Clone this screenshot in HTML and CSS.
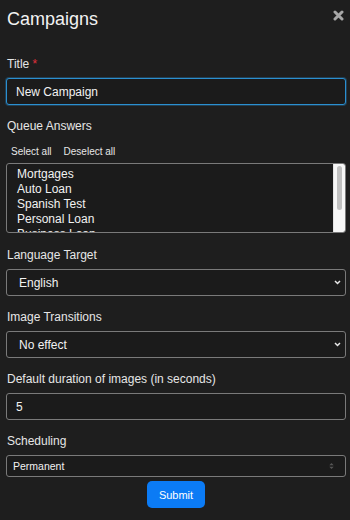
FILE: index.html
```html
<!DOCTYPE html>
<html lang="en">
<head>
    <meta charset="UTF-8">
    <meta name="viewport" content="width=device-width, initial-scale=1.0">
    <title>Campaigns</title>
    <link rel="stylesheet" href="styles.css">
</head>
<body>
    <div class="modal">
        <div class="modal-header">
            <h1>Campaigns</h1>
            <svg class="close-icon" width="11" height="11" viewBox="0 0 11 11">
                <path d="M2 2 L9 9 M9 2 L2 9" stroke="#a6a6a6" stroke-width="3" stroke-linecap="round"/>
            </svg>
        </div>

        <form class="campaign-form">
            <div class="field">
                <label>Title <span class="required">*</span></label>
                <input class="text-input focused" type="text" value="New Campaign">
            </div>

            <div class="field queue">
                <label>Queue Answers</label>
                <div class="bulk-actions">
                    <button type="button" class="link-btn">Select all</button>
                    <button type="button" class="link-btn">Deselect all</button>
                </div>
                <div class="listbox">
                    <div class="options">
                        <div class="option">Mortgages</div>
                        <div class="option">Auto Loan</div>
                        <div class="option">Spanish Test</div>
                        <div class="option">Personal Loan</div>
                        <div class="option">Business Loan</div>
                        <div class="option">Refinance</div>
                        <div class="option">Credit Cards</div>
                    </div>
                    <div class="scroll-track">
                        <div class="scroll-thumb"></div>
                    </div>
                </div>
            </div>

            <div class="field">
                <label>Language Target</label>
                <div class="select-box">
                    <span>English</span>
                    <svg width="7" height="5" viewBox="0 0 7 5"><path d="M1 1 L3.5 3.5 L6 1" fill="none" stroke="#e8e8e8" stroke-width="1.5"/></svg>
                </div>
            </div>

            <div class="field">
                <label>Image Transitions</label>
                <div class="select-box">
                    <span>No effect</span>
                    <svg width="7" height="5" viewBox="0 0 7 5"><path d="M1 1 L3.5 3.5 L6 1" fill="none" stroke="#e8e8e8" stroke-width="1.5"/></svg>
                </div>
            </div>

            <div class="field">
                <label>Default duration of images (in seconds)</label>
                <input class="text-input" type="text" value="5">
            </div>

            <div class="field last">
                <label>Scheduling</label>
                <div class="select-box small">
                    <span>Permanent</span>
                    <svg width="5" height="8" viewBox="0 0 5 8"><path d="M0.3 3.3 L2.5 1 L4.7 3.3 Z M0.3 4.7 L2.5 7 L4.7 4.7 Z" fill="#555555"/></svg>
                </div>
            </div>

            <div class="actions">
                <button type="button" class="submit-btn">Submit</button>
            </div>
        </form>
    </div>
</body>
</html>
```

FILE: styles.css
```css
html, body {
    margin: 0;
    background-color: #1e1e1e;
}

body {
    font-family: "Liberation Sans", Arial, sans-serif;
    color: #ececec;
}

.modal {
    padding: 0 4px 0 6px;
}

.modal-header {
    display: flex;
    justify-content: space-between;
    align-items: flex-start;
    height: 57px;
}

.modal-header h1 {
    margin: 8px 0 0 1px;
    font-size: 18px;
    line-height: 22px;
    font-weight: 400;
    color: #f2f2f2;
}

.close-icon {
    margin-top: 10px;
    margin-right: 2px;
}

.campaign-form {
    display: flex;
    flex-direction: column;
}

.field {
    display: flex;
    flex-direction: column;
    margin-bottom: 14px;
}

.field.queue {
    margin-bottom: 15px;
}

.field.last {
    margin-bottom: 4px;
}

.field label {
    font-size: 12px;
    line-height: 15px;
    margin: 0 0 6px 1px;
    color: #e6e6e6;
}

.required {
    color: #e0303c;
}

.text-input {
    box-sizing: border-box;
    height: 27px;
    width: 340px;
    margin: 0;
    padding: 0 9px;
    background-color: #1b1b1b;
    border: 1px solid #7a7a7a;
    border-radius: 3px;
    color: #f2f2f2;
    font-family: inherit;
    font-size: 12px;
    outline: none;
}

.text-input.focused {
    border-color: #2b8fd0;
    box-shadow: 0 0 0 1px rgba(43, 143, 208, 0.3);
}

.bulk-actions {
    display: flex;
    gap: 12px;
    margin: 5px 0 4px 5px;
}

.link-btn {
    background: none;
    border: none;
    padding: 0;
    color: #e6e6e6;
    font-family: inherit;
    font-size: 10px;
    line-height: 14px;
}

.listbox {
    box-sizing: border-box;
    display: flex;
    width: 340px;
    height: 70px;
    background-color: #1b1b1b;
    border: 1px solid #7a7a7a;
    border-radius: 3px;
    overflow: hidden;
}

.options {
    flex: 1;
    overflow: hidden;
    padding: 3px 0 0 10px;
}

.option {
    font-size: 12px;
    line-height: 15px;
    color: #f2f2f2;
}

.scroll-track {
    width: 12px;
    padding: 2px 3px;
    box-sizing: border-box;
    background-color: #f7f7f7;
    border-left: 1px solid #e4e4e4;
}

.scroll-thumb {
    height: 44px;
    background-color: #c1c1c1;
    border-radius: 3px;
}

.select-box {
    box-sizing: border-box;
    display: flex;
    justify-content: space-between;
    align-items: center;
    height: 27px;
    width: 340px;
    padding: 0 4px 0 12px;
    background-color: #1b1b1b;
    border: 1px solid #7a7a7a;
    border-radius: 3px;
    font-size: 12px;
    color: #f2f2f2;
}

.select-box.small {
    height: 22px;
    padding: 0 11px 0 6px;
    font-size: 10.5px;
}

.actions {
    display: flex;
    justify-content: center;
}

.submit-btn {
    width: 58px;
    height: 27px;
    padding: 0;
    background-color: #0b7bf5;
    border: none;
    border-radius: 5px;
    color: #ffffff;
    font-family: inherit;
    font-size: 11px;
}
```
